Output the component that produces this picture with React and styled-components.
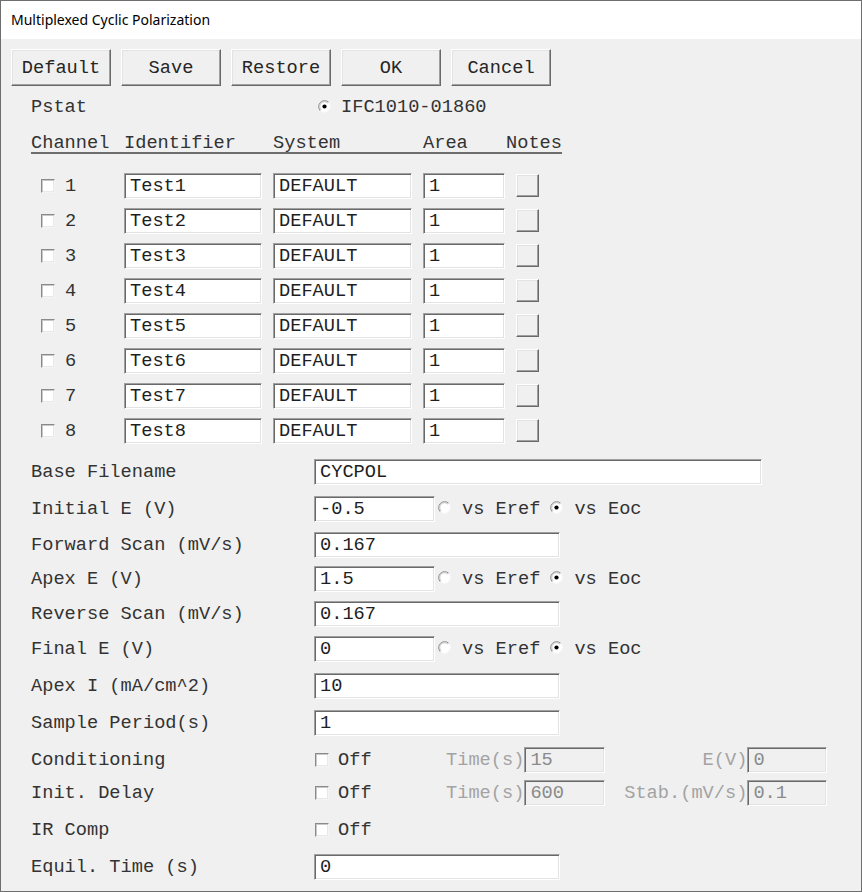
import React from 'react';
import styled, { createGlobalStyle } from 'styled-components';

const Global = createGlobalStyle`
  html, body { margin: 0; padding: 0; background: #ffffff; }
  body { width: 862px; height: 892px; overflow: hidden; }
  * { box-sizing: border-box; }
`;

const Window = styled.div`
  width: 862px;
  height: 892px;
  border: 1px solid #6e6e6e;
  background: #f0f0f0;
  display: flex;
  flex-direction: column;
  font-family: "Liberation Mono", "Courier New", monospace;
  font-size: 18.67px;
  line-height: 20px;
  color: #333333;
`;

const TitleBar = styled.div`
  height: 38px;
  flex: none;
  background: #ffffff;
  display: flex;
  align-items: center;
  padding-left: 10px;
  font-family: "Noto Sans", "Segoe UI", sans-serif;
  font-size: 14px;
  color: #000;
`;

const Body = styled.div`
  padding-top: 10px;
  display: flex;
  flex-direction: column;
`;

const Toolbar = styled.div`
  display: flex;
  gap: 10px;
  margin: 0 10px;
`;

const raised = `
  background: #f0f0f0;
  border: 1px solid;
  border-color: #ffffff #696969 #696969 #ffffff;
  box-shadow: inset -1px -1px 0 #a0a0a0, inset 1px 1px 0 #e3e3e3;
`;

const sunken = `
  border: 1px solid;
  border-color: #a0a0a0 #ffffff #ffffff #a0a0a0;
  box-shadow: inset 1px 1px 0 #696969, inset -1px -1px 0 #e3e3e3;
`;

const Button = styled.button`
  ${raised}
  width: 100px;
  height: 37px;
  padding: 0;
  font: inherit;
  color: #262626;
  display: flex;
  align-items: center;
  justify-content: center;
`;

const Content = styled.div`
  padding-left: 30px;
  display: flex;
  flex-direction: column;
`;

const PstatRow = styled.div`
  margin-top: 7px;
  height: 28px;
  display: flex;
  align-items: center;
`;

const PstatLabel = styled.div`
  width: 287px;
`;

const Option = styled.div`
  display: flex;
  align-items: center;
  gap: ${(p) => p.$gap || 12}px;
  margin-left: ${(p) => p.$ml || 0}px;
`;

const Table = styled.div`
  display: grid;
  grid-template-columns: 93px 149px 150px 83px 56px;
  width: 531px;
`;

const Header = styled(Table)`
  height: 33px;
  align-items: start;
  padding-top: 12px;
  border-bottom: 2px solid #6d6d6d;
  overflow: visible;
`;

const ChannelRows = styled.div`
  margin-top: 14px;
  display: flex;
  flex-direction: column;
`;

const ChannelRow = styled(Table)`
  height: 35px;
  align-items: center;
`;

const CheckCell = styled.div`
  display: flex;
  align-items: center;
  gap: 10px;
  padding-left: 10px;
`;

const Field = styled.input`
  ${sunken}
  width: ${(p) => p.$w}px;
  height: 26px;
  padding: 0 0 0 5px;
  margin: 0;
  font: inherit;
  color: #1e1e1e;
  background: #ffffff;
  outline: none;
`;

const DimField = styled(Field)`
  background: #f0f0f0;
  color: #8a8a8a;
`;

const NotesButton = styled.div`
  ${raised}
  width: 23px;
  height: 23px;
  margin-left: 10px;
`;

const Box = styled.span`
  display: inline-block;
  width: 14px;
  height: 14px;
  flex: none;
  background: #ffffff;
  border: 1px solid;
  border-color: #8a8a8a #f4f4f4 #f4f4f4 #8a8a8a;
  box-shadow: inset 1px 1px 0 #c8c8c8, inset -1px -1px 0 #e8e8e8;
  margin-left: ${(p) => p.$ml || 0}px;
`;

const FormRow = styled.div`
  display: grid;
  grid-template-columns: 283px auto;
  align-items: center;
  height: 26px;
  margin-top: ${(p) => p.$mt}px;
`;

const Controls = styled.div`
  display: flex;
  align-items: center;
`;

const CheckGroup = styled.div`
  width: 132px;
  display: flex;
  align-items: center;
  gap: 9px;
`;

const DimLabel = styled.span`
  color: #a3a3a3;
  width: ${(p) => (p.$w ? `${p.$w}px` : 'auto')};
  text-align: right;
`;

const RadioSvg = styled.svg`
  flex: none;
  margin-bottom: ${(p) => p.$mb || 0}px;
`;

function Radio({ checked, mb }) {
  return (
    <RadioSvg width="13" height="13" viewBox="0 0 13 13" $mb={mb}>
      <circle cx="6.5" cy="6.5" r="6" fill="#ffffff" />
      <path d="M2.26 10.74 A6 6 0 0 1 10.74 2.26" fill="none" stroke="#8a8a8a" strokeWidth="1" />
      <path d="M3.1 9.9 A4.8 4.8 0 0 1 9.9 3.1" fill="none" stroke="#bdbdbd" strokeWidth="1" />
      <path d="M10.74 2.26 A6 6 0 0 1 2.26 10.74" fill="none" stroke="#f6f6f6" strokeWidth="1" />
      {checked && <circle cx="6.5" cy="6.5" r="2.1" fill="#000000" />}
    </RadioSvg>
  );
}

function VsOptions() {
  return (
    <>
      <Option $ml={3} $gap={11}>
        <Radio mb={3} />
        <span>vs Eref</span>
      </Option>
      <Option $ml={10} $gap={11}>
        <Radio checked mb={3} />
        <span>vs Eoc</span>
      </Option>
    </>
  );
}

const channels = [1, 2, 3, 4, 5, 6, 7, 8];

export default function App() {
  return (
    <>
      <Global />
      <Window>
        <TitleBar>Multiplexed Cyclic Polarization</TitleBar>
        <Body>
          <Toolbar>
            <Button>Default</Button>
            <Button>Save</Button>
            <Button>Restore</Button>
            <Button>OK</Button>
            <Button>Cancel</Button>
          </Toolbar>
          <Content>
            <PstatRow>
              <PstatLabel>Pstat</PstatLabel>
              <Option $gap={10}>
                <Radio checked mb={2} />
                <span>IFC1010-01860</span>
              </Option>
            </PstatRow>
            <Header>
              <span>Channel</span>
              <span>Identifier</span>
              <span>System</span>
              <span>Area</span>
              <span>Notes</span>
            </Header>
            <ChannelRows>
              {channels.map((n) => (
                <ChannelRow key={n}>
                  <CheckCell>
                    <Box />
                    <span>{n}</span>
                  </CheckCell>
                  <Field $w={138} readOnly value={`Test${n}`} />
                  <Field $w={139} readOnly value="DEFAULT" />
                  <Field $w={82} readOnly value="1" />
                  <NotesButton />
                </ChannelRow>
              ))}
            </ChannelRows>

            <FormRow $mt={11}>
              <span>Base Filename</span>
              <Field $w={448} readOnly value="CYCPOL" />
            </FormRow>
            <FormRow $mt={11}>
              <span>Initial E (V)</span>
              <Controls>
                <Field $w={121} readOnly value="-0.5" />
                <VsOptions />
              </Controls>
            </FormRow>
            <FormRow $mt={10}>
              <span>Forward Scan (mV/s)</span>
              <Field $w={246} readOnly value="0.167" />
            </FormRow>
            <FormRow $mt={8}>
              <span>Apex E (V)</span>
              <Controls>
                <Field $w={121} readOnly value="1.5" />
                <VsOptions />
              </Controls>
            </FormRow>
            <FormRow $mt={9}>
              <span>Reverse Scan (mV/s)</span>
              <Field $w={246} readOnly value="0.167" />
            </FormRow>
            <FormRow $mt={9}>
              <span>Final E (V)</span>
              <Controls>
                <Field $w={121} readOnly value="0" />
                <VsOptions />
              </Controls>
            </FormRow>
            <FormRow $mt={11}>
              <span>Apex I (mA/cm^2)</span>
              <Field $w={246} readOnly value="10" />
            </FormRow>
            <FormRow $mt={11}>
              <span>Sample Period(s)</span>
              <Field $w={246} readOnly value="1" />
            </FormRow>
            <FormRow $mt={11}>
              <span>Conditioning</span>
              <Controls>
                <CheckGroup>
                  <Box $ml={1} />
                  <span>Off</span>
                </CheckGroup>
                <DimLabel>Time(s)</DimLabel>
                <DimField $w={81} readOnly disabled value="15" />
                <DimLabel $w={142}>E(V)</DimLabel>
                <DimField $w={80} readOnly disabled value="0" />
              </Controls>
            </FormRow>
            <FormRow $mt={7}>
              <span>Init. Delay</span>
              <Controls>
                <CheckGroup>
                  <Box $ml={1} />
                  <span>Off</span>
                </CheckGroup>
                <DimLabel>Time(s)</DimLabel>
                <DimField $w={81} readOnly disabled value="600" />
                <DimLabel $w={142}>Stab.(mV/s)</DimLabel>
                <DimField $w={80} readOnly disabled value="0.1" />
              </Controls>
            </FormRow>
            <FormRow $mt={11}>
              <span>IR Comp</span>
              <Controls>
                <CheckGroup>
                  <Box $ml={1} />
                  <span>Off</span>
                </CheckGroup>
              </Controls>
            </FormRow>
            <FormRow $mt={11}>
              <span>Equil. Time (s)</span>
              <Field $w={246} readOnly value="0" />
            </FormRow>
          </Content>
        </Body>
      </Window>
    </>
  );
}
